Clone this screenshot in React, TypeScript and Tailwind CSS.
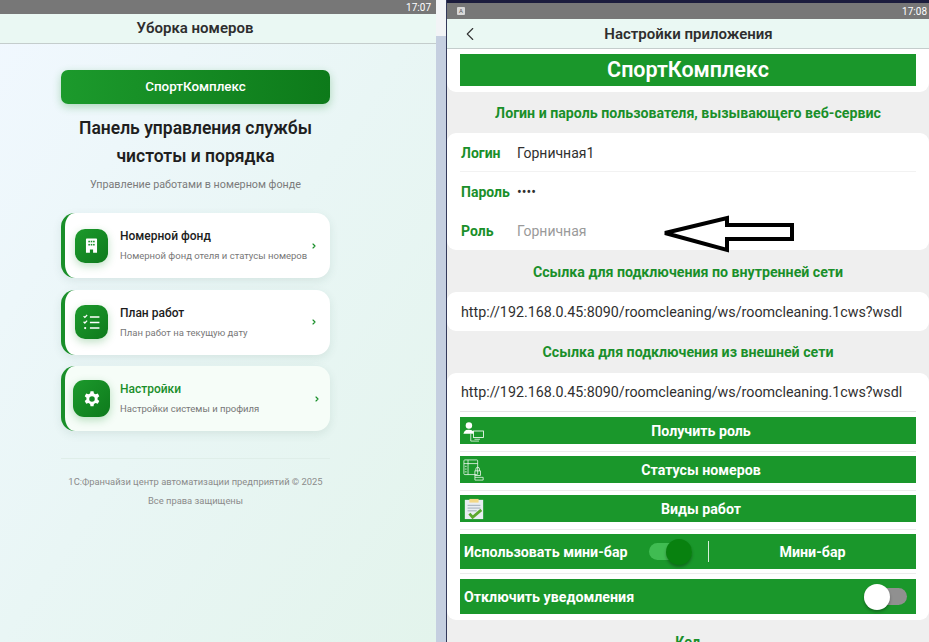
import { ChevronLeft, ChevronRight } from 'lucide-react'

const font = 'font-["Roboto","Liberation_Sans",sans-serif]'

function StatusBar({ time }: { time: string }) {
  return (
    <div className="flex h-[14px] shrink-0 items-center justify-end bg-[#777777] pr-[5px] text-[10px] text-white">
      <span>{time}</span>
    </div>
  )
}

function BuildingIcon() {
  return (
    <svg viewBox="0 0 24 24" className="h-[19px] w-[19px]" fill="white">
      <path d="M6 3h12a1 1 0 0 1 1 1v17h-5v-4h-4v4H5V4a1 1 0 0 1 1-1z" />
      <g fill="#1a8f2a">
        <rect x="8" y="6" width="2" height="2" />
        <rect x="11" y="6" width="2" height="2" />
        <rect x="14" y="6" width="2" height="2" />
        <rect x="8" y="10" width="2" height="2" />
        <rect x="11" y="10" width="2" height="2" />
        <rect x="14" y="10" width="2" height="2" />
      </g>
    </svg>
  )
}

function ChecklistIcon() {
  return (
    <svg viewBox="0 0 24 24" className="h-[19px] w-[19px]" fill="none" stroke="white" strokeWidth="2">
      <path d="M10 5h12M10 12h12M10 19h12" />
      <path d="M2 4l1.6 1.6L6.5 2.6M2 11l1.6 1.6 2.9-3" strokeWidth="1.6" />
      <circle cx="4" cy="19" r="1.4" fill="white" stroke="none" />
    </svg>
  )
}

function GearIcon() {
  return (
    <svg viewBox="0 0 24 24" className="h-[18px] w-[18px]" fill="white">
      <path
        fillRule="evenodd"
        d="M10 1.5h4l.6 3 2.2 1.2 2.9-1 2 3.5-2.3 2v2.6l2.3 2-2 3.5-2.9-1-2.2 1.2-.6 3h-4l-.6-3-2.2-1.2-2.9 1-2-3.5 2.3-2v-2.6l-2.3-2 2-3.5 2.9 1 2.2-1.2zM12 8.3a3.7 3.7 0 1 0 0 7.4 3.7 3.7 0 0 0 0-7.4z"
      />
    </svg>
  )
}

function MenuCard({
  title,
  text,
  icon,
  active,
}: {
  title: string
  text: string
  icon: React.ReactNode
  active?: boolean
}) {
  return (
    <div
      className={`flex h-[65px] items-center rounded-[14px] border-l-[4px] border-[#1a8f2a] shadow-[0_3px_10px_rgba(40,90,70,0.10)] ${
        active ? 'bg-[#f6fdf8] pl-[8px]' : 'bg-white pl-[10px]'
      }`}
    >
      <div
        className={`flex shrink-0 items-center justify-center bg-gradient-to-br from-[#1c9a2c] to-[#0e7a1c] shadow-[0_3px_8px_rgba(26,143,42,0.28)] ${
          active ? 'h-[37px] w-[37px] rounded-[11px]' : 'h-[34px] w-[33px] rounded-[10px]'
        }`}
      >
        {icon}
      </div>
      <div className={`min-w-0 flex-1 ${active ? 'ml-[10px]' : 'ml-[12px]'}`}>
        <div className={`text-[12px] leading-[16px] font-medium ${active ? 'text-[#1a8f2a]' : 'text-[#1c1c1c]'}`}>{title}</div>
        <div className="mt-[5px] text-[9.5px] leading-[14px] whitespace-nowrap text-[#777777]">{text}</div>
      </div>
      <ChevronRight size={8} strokeWidth={3.5} className={`shrink-0 text-[#1a8f2a] ${active ? 'mr-[9px]' : 'mr-[12px]'}`} />
    </div>
  )
}

function LeftPanel() {
  return (
    <div className="flex w-[436px] shrink-0 flex-col bg-gradient-to-br from-[#f1f8ff] via-[#e9f6f5] to-[#e3f4ec]">
      <StatusBar time="17:07" />
      <div className="flex h-[30px] shrink-0 items-center justify-center border-b border-[#c4cdcc] bg-[#eaf8f3] pr-[46px] text-[15px] font-semibold text-[#2e2e2e]">
        Уборка номеров
      </div>
      <div className="flex flex-col px-[61px] pt-[26px]">
        <div className="mb-[10px] flex h-[34px] w-[269px] items-center justify-center rounded-[7px] bg-gradient-to-r from-[#1c9a2c] to-[#0d7a1a] text-[13.4px] font-medium text-white shadow-[0_3px_8px_rgba(26,143,42,0.3)]">
          СпортКомплекс
        </div>
        <h1 className="w-[269px] text-center text-[17.5px] leading-[28px] font-semibold text-[#1f1f1f]">
          Панель управления службы
          <br />
          чистоты и порядка
        </h1>
        <p className="mt-[7px] w-[269px] text-center text-[10.75px] leading-[16px] text-[#7b7b7b]">
          Управление работами в номерном фонде
        </p>
        <div className="mt-[20px] flex w-[269px] flex-col gap-[11.5px]">
          <MenuCard title="Номерной фонд" text="Номерной фонд отеля и статусы номеров" icon={<BuildingIcon />} />
          <MenuCard title="План работ" text="План работ на текущую дату" icon={<ChecklistIcon />} />
          <MenuCard title="Настройки" text="Настройки системы и профиля" icon={<GearIcon />} active />
        </div>
        <div className="mt-[27px] w-[269px] border-t border-[#dfeee9] pt-[14px] text-center text-[9.4px] leading-[18.5px] text-[#8b8b8b]">
          1С:Франчайзи центр автоматизации предприятий © 2025
          <div>Все права защищены</div>
        </div>
      </div>
    </div>
  )
}

function SectionTitle({ children }: { children: string }) {
  return <div className="text-center text-[14.2px] leading-[16px] font-bold text-[#1a8f2a]">{children}</div>
}

function FieldRow({ label, value, muted, line }: { label: string; value: string; muted?: boolean; line?: boolean }) {
  return (
    <div className={`mx-[13px] flex h-[39px] items-center pt-[2px] pl-[1px] ${line ? 'border-b border-[#f2f2f2]' : ''}`}>
      <span className="w-[56px] text-[14px] font-bold text-[#1a8f2a]">{label}</span>
      <span className={`text-[14px] ${muted ? 'text-[#9a9a9a]' : 'text-[#303030]'}`}>{value}</span>
    </div>
  )
}

function UserPcIcon() {
  return (
    <svg viewBox="0 0 24 24" className="h-[22px] w-[24px]" fill="none">
      <circle cx="7" cy="6" r="3.5" fill="white" />
      <path d="M1 15c1-4 3-4.500 6-4.500s4 1 5 2V15z" fill="white" />
      <rect x="12" y="12" width="11" height="7" stroke="white" strokeWidth="0.9" />
      <path d="M9 15v8h9M13 21h6" stroke="white" strokeWidth="0.8" />
    </svg>
  )
}

function StatusIcon() {
  return (
    <svg viewBox="0 0 24 24" className="h-[22px] w-[22px]" fill="none" stroke="white" strokeWidth="0.8">
      <rect x="1" y="1" width="15" height="16" rx="1" />
      <path d="M5.500 1v16M1 5h15M2 8h2M2 11h2M2 14h2" />
      <rect x="13" y="13" width="6" height="5" />
      <path d="M14 13v-2a2 2 0 0 1 4 0v2M13 18v5h9v-3h-9" />
    </svg>
  )
}

function ClipboardIcon() {
  return (
    <svg viewBox="0 0 24 24" className="h-[22px] w-[22px]">
      <rect x="2" y="2" width="20" height="21" fill="#e9eef2" />
      <rect x="7" y="1" width="10" height="4" fill="#f3d886" />
      <path d="M5 8h14M5 11h14M5 14h10" stroke="#9aa8b5" strokeWidth="1" />
      <path d="M7 17l3.500 4L20 13" stroke="#5ca82e" strokeWidth="3" fill="none" />
    </svg>
  )
}

function ActionBar({ label, icon }: { label: string; icon: React.ReactNode }) {
  return (
    <div className="mb-[4px] border-b border-[#ececec] pb-[7px]">
      <div className="flex h-[27px] items-center bg-[#1a972b] text-[14.2px] font-bold text-white">
        <span className="flex w-[25px] shrink-0 justify-center pl-[2px]">{icon}</span>
        <span className="flex-1 pt-[2px] pl-[1px] text-center">{label}</span>
      </div>
    </div>
  )
}

function Toggle({ on }: { on: boolean }) {
  return (
    <div className={`relative h-[17px] w-[43px] shrink-0 rounded-full ${on ? 'bg-[#40bc52]' : 'bg-[#909090]'}`}>
      <span
        className={`absolute top-[-4px] h-[26px] w-[26px] rounded-full shadow-[0_2px_3px_rgba(0,0,0,0.3)] ${
          on ? 'right-0 bg-[#08810f]' : 'left-0 bg-white'
        }`}
      />
    </div>
  )
}

function LoginArrow() {
  return (
    <svg viewBox="0 0 133 38" className="absolute top-[82px] left-[214px] h-[38px] w-[133px]" fill="white" stroke="black" strokeWidth="4">
      <path d="M4 18 L66 3 V10 H131 V24 H66 V35 Z" />
    </svg>
  )
}

function RightPanel() {
  return (
    <div className="min-w-0 flex-1 overflow-hidden bg-[#efefef]">
      <div className="h-[3px] bg-[#1b1c3d]" />
      <div className="flex h-[16px] items-center justify-between bg-[#777777] pr-[2px] pl-[10px] text-[10px] text-white">
        <span className="flex h-[8px] w-[8px] items-center justify-center rounded-[1px] bg-[#d8d8d8] text-[6px] leading-none text-[#555555]">A</span>
        <span>17:08</span>
      </div>
      <div className="relative flex h-[30px] items-center justify-center border-b border-[#c4cdcc] bg-[#eaf8f3] pt-[1px] pl-[1px] text-[15px] font-semibold text-[#2e2e2e]">
        <ChevronLeft size={22} strokeWidth={1.2} className="absolute left-[12px] text-[#333333]" />
        Настройки приложения
      </div>
      <div className="rounded-b-[9px] bg-white px-[13px] pt-[5px] pb-[6px]">
        <div className="flex h-[32px] items-center justify-center bg-[#1a972b] text-[21.5px] font-semibold text-white">СпортКомплекс</div>
      </div>
      <div className="pt-[13px] pb-[12px]">
        <SectionTitle>Логин и пароль пользователя, вызывающего веб-сервис</SectionTitle>
      </div>
      <div className="relative rounded-[9px] bg-white">
        <FieldRow label="Логин" value="Горничная1" line />
        <FieldRow label="Пароль" value="••••" />
        <FieldRow label="Роль" value="Горничная" muted />
        <LoginArrow />
      </div>
      <div className="pt-[14px] pb-[12px]">
        <SectionTitle>Ссылка для подключения по внутренней сети</SectionTitle>
      </div>
      <div className="flex h-[39px] items-center rounded-[9px] bg-white pt-[2px] pl-[14px] text-[14.27px] text-[#303030]">
        http://192.168.0.45:8090/roomcleaning/ws/roomcleaning.1cws?wsdl
      </div>
      <div className="py-[13px]">
        <SectionTitle>Ссылка для подключения из внешней сети</SectionTitle>
      </div>
      <div className="rounded-[9px] bg-white px-[13px] pb-[6px]">
        <div className="flex h-[39px] items-center border-b border-[#e4e4e4] pt-[2px] pl-[1px] text-[14.27px] text-[#303030]">
          http://192.168.0.45:8090/roomcleaning/ws/roomcleaning.1cws?wsdl
        </div>
        <div className="mt-[5px] flex flex-col">
          <ActionBar label="Получить роль" icon={<UserPcIcon />} />
          <ActionBar label="Статусы номеров" icon={<StatusIcon />} />
          <ActionBar label="Виды работ" icon={<ClipboardIcon />} />
          <div className="mb-[5px] border-b border-[#ececec] pb-[4px]">
            <div className="flex h-[35px] items-center bg-[#1a972b] text-[14.25px] font-bold text-white">
              <span className="ml-[4px] w-[185px] shrink-0 pt-[2px]">Использовать мини-бар</span>
              <Toggle on />
              <span className="ml-[16px] h-[21px] w-px bg-[#d6efd9]" />
              <span className="flex-1 pt-[2px] text-center">Мини-бар</span>
            </div>
          </div>
          <div className="flex h-[35px] items-center justify-between bg-[#1a972b] pr-[9px] pl-[4px] text-[14.25px] font-bold text-white">
            <span className="pt-[2px]">Отключить уведомления</span>
            <Toggle on={false} />
          </div>
        </div>
      </div>
      <div className="pt-[14px]">
        <SectionTitle>Код</SectionTitle>
      </div>
    </div>
  )
}

export default function App() {
  return (
    <div className={`flex h-[642px] w-[929px] overflow-hidden bg-[#c5cfe0] ${font}`}>
      <LeftPanel />
      <div className="flex w-[10px] shrink-0 flex-col">
        <div className="h-[36px] bg-[#f2f4f6]" />
        <div className="flex-1 bg-[#c5cfe0]" />
      </div>
      <div className="w-px shrink-0 bg-[#33395a]" />
      <RightPanel />
    </div>
  )
}
